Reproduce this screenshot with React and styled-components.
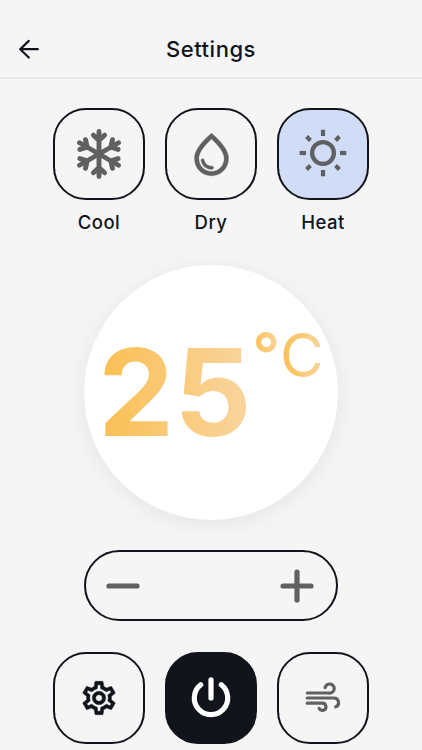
import React, { useState } from 'react'
import styled, { createGlobalStyle } from 'styled-components'
import { MdOutlineWaterDrop, MdOutlineSettings } from 'react-icons/md'

const GlobalStyle = createGlobalStyle`
  * {
    box-sizing: border-box;
  }

  body {
    margin: 0;
    background: #f5f5f5;
    color: #11141b;
    font-family: Inter, 'Open Sans', sans-serif;
    overflow: hidden;
  }
`

const Screen = styled.div`
  width: 422px;
  height: 750px;
  display: flex;
  flex-direction: column;
  align-items: center;
`

const Header = styled.header`
  width: 100%;
  height: 79px;
  padding: 20px 18px 0;
  display: grid;
  grid-template-columns: 24px 1fr 24px;
  align-items: center;
  border-bottom: 2px solid #e8e8e8;
`

const BackButton = styled.button`
  display: flex;
  padding: 0;
  border: 0;
  background: none;
  color: inherit;
`

const Title = styled.h1`
  margin: 0;
  font-size: 22px;
  font-weight: 500;
  line-height: 28px;
  letter-spacing: 0.5px;
  text-align: center;
`

const Row = styled.div`
  display: flex;
  gap: 20px;
  margin-top: ${({ $top }) => $top}px;
`

const Mode = styled.div`
  display: flex;
  flex-direction: column;
  align-items: center;
`

const Tile = styled.button`
  width: 92px;
  height: 92px;
  padding: 0;
  display: flex;
  align-items: center;
  justify-content: center;
  border: 2px solid #11141b;
  border-radius: 33px;
  background: ${({ $bg }) => $bg || 'transparent'};
  color: ${({ $color }) => $color || '#5f6062'};
`

const Label = styled.span`
  margin-top: 10px;
  font-size: 18.5px;
  font-weight: 500;
  line-height: 25px;
  letter-spacing: 0.5px;
`

const Dial = styled.div`
  width: 254px;
  height: 255px;
  margin-top: 30px;
  padding: 64px 0 0 14px;
  display: flex;
  align-items: flex-start;
  border-radius: 50%;
  background: #fff;
  box-shadow: 0 4px 22px rgba(0, 0, 0, 0.07);
`

const GradientText = styled.span`
  background: linear-gradient(90deg, #fbbf52, #f8d5a0);
  background-clip: text;
  -webkit-background-clip: text;
  color: transparent;
  white-space: nowrap;
`

const Degrees = styled(GradientText)`
  font-size: 121px;
  font-weight: 700;
  line-height: 126px;
`

const DegreeSign = styled(GradientText)`
  margin-left: 1px;
  font-size: 60px;
  font-weight: 600;
  line-height: 51px;
`

const Unit = styled(GradientText)`
  font-size: 60px;
  font-weight: 400;
  line-height: 53px;
`

const Stepper = styled.div`
  width: 254px;
  height: 71px;
  margin-top: 30px;
  padding: 0 22px 0 20px;
  display: flex;
  align-items: center;
  justify-content: space-between;
  border: 2px solid #11141b;
  border-radius: 36px;
`

const StepButton = styled.button`
  display: flex;
  padding: 0;
  border: 0;
  background: none;
  color: #5f6062;
`

// the first path of a material icon is its empty bounding box
const DropIcon = styled(MdOutlineWaterDrop)`
  path:not([fill='none']) {
    stroke: currentColor;
    stroke-width: 0.2px;
  }
`

const GearIcon = styled(MdOutlineSettings)`
  margin-top: -1px;

  path:not([fill='none']) {
    stroke: currentColor;
    stroke-width: 0.25px;
  }
`

const Snowflake = () => (
    <svg width="52" height="52" viewBox="-26 -26 52 52" fill="none" stroke="currentColor" strokeWidth="4.9" strokeLinecap="round">
        {[0, 60, 120, 180, 240, 300].map((angle) => (
            <path key={angle} d="M0 0V-22.5M-5.6 -18.8L0 -13.6L5.6 -18.8" transform={`rotate(${angle})`} />
        ))}
    </svg>
)

const Sun = () => (
    <svg width="50" height="52" viewBox="-25 -25 50 52" fill="none" stroke="currentColor" strokeWidth="4.2">
        <circle r="10.9" strokeWidth="4.3" />
        {[0, 90, 180, 270].map((angle) => (
            <path key={angle} d="M0 -17V-23.3" transform={`rotate(${angle})`} />
        ))}
        {[45, 135, 225, 315].map((angle) => (
            <path key={angle} d="M0 -17.8V-23.2" transform={`rotate(${angle})`} />
        ))}
    </svg>
)

const Power = () => (
    <svg width="44" height="44" viewBox="-22 -22 44 44" fill="none" stroke="currentColor" strokeWidth="5.2" strokeLinecap="round">
        <path d="M-10.3 -13.2A16.7 16.7 0 1 0 10.3 -13.2M0 -18.2V0" />
    </svg>
)

const Wind = () => (
    <svg width="36" height="32" viewBox="0 0 36 32" fill="none" stroke="currentColor" strokeWidth="3.2" strokeLinecap="round">
        <path d="M2.2 11H23.2A4.6 4.6 0 1 0 20.1 5.6" />
        <path d="M2.2 16H28.6C34.6 16 35 23.6 30.7 24.8" />
        <path d="M2.2 21.2H17.3A3.6 3.6 0 1 1 14.1 26.4" />
    </svg>
)

export default function App() {
    const [mode, setMode] = useState('Heat')
    const [temp, setTemp] = useState(25)

    const modes = [
        { name: 'Cool', icon: <Snowflake /> },
        { name: 'Dry', icon: <DropIcon size={51} /> },
        { name: 'Heat', icon: <Sun /> },
    ]

    return (
        <>
            <GlobalStyle />
            <Screen>
                <Header>
                    <BackButton aria-label="Back">
                        <svg width="24" height="24" viewBox="0 0 24 24" fill="none" stroke="currentColor" strokeWidth="2.2" strokeLinecap="round" strokeLinejoin="round">
                            <path d="M19.8 12.2H2.2M10.8 3.9L2.2 12.2L10.8 20.5" />
                        </svg>
                    </BackButton>
                    <Title>Settings</Title>
                </Header>

                <Row $top={29}>
                    {modes.map(({ name, icon }) => (
                        <Mode key={name}>
                            <Tile $bg={mode === name && '#d1ddf6'} onClick={() => setMode(name)}>{icon}</Tile>
                            <Label>{name}</Label>
                        </Mode>
                    ))}
                </Row>

                <Dial>
                    <Degrees>{temp}</Degrees>
                    <DegreeSign>°</DegreeSign>
                    <Unit>C</Unit>
                </Dial>

                <Stepper>
                    <StepButton aria-label="Decrease" onClick={() => setTemp(temp - 1)}>
                        <svg width="34" height="34" viewBox="0 0 34 34" stroke="currentColor" strokeWidth="5.2" strokeLinecap="round">
                            <path d="M3 17H31" />
                        </svg>
                    </StepButton>
                    <StepButton aria-label="Increase" onClick={() => setTemp(temp + 1)}>
                        <svg width="34" height="34" viewBox="0 0 34 34" stroke="currentColor" strokeWidth="5.2" strokeLinecap="round">
                            <path d="M3 17H31M17 3V31" />
                        </svg>
                    </StepButton>
                </Stepper>

                <Row $top={31}>
                    <Tile $color="#11141b"><GearIcon size={40} /></Tile>
                    <Tile $bg="#11141b" $color="#fff"><Power /></Tile>
                    <Tile><Wind /></Tile>
                </Row>
            </Screen>
        </>
    )
}
